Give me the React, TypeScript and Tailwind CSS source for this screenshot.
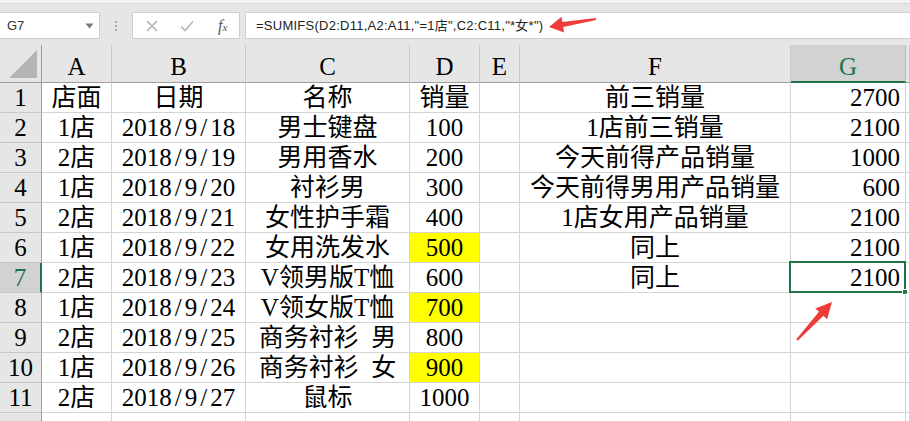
import React from "react";

type Row = { a: string; b: string; c: string; d: string; dy?: boolean; f: string; g: string };

const rows: Row[] = [
  { a: "店面", b: "日期", c: "名称", d: "销量", f: "前三销量", g: "2700" },
  { a: "1店", b: "2018/9/18", c: "男士键盘", d: "100", f: "1店前三销量", g: "2100" },
  { a: "2店", b: "2018/9/19", c: "男用香水", d: "200", f: "今天前得产品销量", g: "1000" },
  { a: "1店", b: "2018/9/20", c: "衬衫男", d: "300", f: "今天前得男用产品销量", g: "600" },
  { a: "2店", b: "2018/9/21", c: "女性护手霜", d: "400", f: "1店女用产品销量", g: "2100" },
  { a: "1店", b: "2018/9/22", c: "女用洗发水", d: "500", dy: true, f: "同上", g: "2100" },
  { a: "2店", b: "2018/9/23", c: "V领男版T恤", d: "600", f: "同上", g: "2100" },
  { a: "1店", b: "2018/9/24", c: "V领女版T恤", d: "700", dy: true, f: "", g: "" },
  { a: "2店", b: "2018/9/25", c: "商务衬衫\u00a0\u00a0男", d: "800", f: "", g: "" },
  { a: "1店", b: "2018/9/26", c: "商务衬衫\u00a0\u00a0女", d: "900", dy: true, f: "", g: "" },
  { a: "2店", b: "2018/9/27", c: "鼠标", d: "1000", f: "", g: "" },
  { a: "", b: "", c: "", d: "", f: "", g: "" },
];

function dateText(s: string) {
  const parts = s.split("/");
  return parts.map((p, i) => (
    <React.Fragment key={i}>
      {i > 0 && <span className="mx-[3px]">/</span>}
      {p}
    </React.Fragment>
  ));
}

const cell =
  "h-[30px] border-r border-b border-[#d4d4d4] leading-[29px] whitespace-nowrap overflow-visible text-black";

export default function App() {
  return (
    <div className="relative w-[910px] h-[421px] overflow-hidden bg-white font-['Liberation_Serif','Noto_Sans_CJK_SC',serif] text-[25px]">
      {/* Formula bar */}
      <div className="h-[3px] bg-[#f3f3f3]" />
      <div className="h-[42px] bg-[#e6e6e6] border-t border-[#d6d6d6] flex items-start pt-[8px]">
        <div className="w-[100px] h-[27px] bg-white border border-l-0 border-[#cfcfcf] flex items-center justify-between pl-[7px] pr-[5px] font-['Liberation_Sans','Noto_Sans_CJK_SC',sans-serif] text-[13px] text-[#333]">
          <span>G7</span>
          <svg width="9" height="6" viewBox="0 0 9 6">
            <path d="M0.5 0.5 L8.5 0.5 L4.5 5.5 Z" fill="#7a7a7a" />
          </svg>
        </div>
        <div className="w-[32px] h-[27px] flex flex-col items-center justify-center gap-[2px]">
          <div className="w-[2px] h-[2px] bg-[#a8a8a8]" />
          <div className="w-[2px] h-[2px] bg-[#a8a8a8]" />
          <div className="w-[2px] h-[2px] bg-[#a8a8a8]" />
        </div>
        <div className="w-[108px] h-[27px] bg-white border border-[#cfcfcf] flex items-center">
          <svg className="ml-[13px]" width="12" height="12" viewBox="0 0 12 12">
            <path d="M1 1 L11 11 M11 1 L1 11" stroke="#b5b5b5" strokeWidth="1.6" />
          </svg>
          <svg className="ml-[22px]" width="14" height="12" viewBox="0 0 14 12">
            <path d="M1 6.5 L5 10.5 L13 1.5" stroke="#b5b5b5" strokeWidth="1.6" fill="none" />
          </svg>
          <span className="ml-[24px] font-['Liberation_Serif',serif] italic text-[16px] text-[#555] leading-none">
            f<span className="text-[11px]">x</span>
          </span>
        </div>
        <div className="ml-[5px] flex-1 h-[27px] bg-white border border-r-0 border-[#cfcfcf] flex items-center pl-[10px] font-['Liberation_Sans','Noto_Sans_CJK_SC',sans-serif] text-[13px] tracking-[0.25px] text-[#222] whitespace-nowrap">
          =SUMIFS(D2:D11,A2:A11,"=1店",C2:C11,"*女*")
        </div>
      </div>

      {/* Grid */}
      <div className="grid grid-cols-[42px_70px_134px_164px_70px_40px_271px_115px_1fr]">
        {/* header row */}
        <div className="h-[38px] bg-[#e6e6e6] border-r border-b border-r-[#9e9e9e] border-b-[#9e9e9e] flex items-end justify-end pr-[4px] pb-[4px]">
          <svg width="28" height="28" viewBox="0 0 28 28">
            <path d="M28 0 L28 28 L0 28 Z" fill="#b4b4b4" />
          </svg>
        </div>
        {["A", "B", "C", "D", "E", "F", "G", ""].map((l) =>
          l === "G" ? (
            <div
              key={l}
              className="h-[38px] bg-[#d2d2d2] border-r border-r-[#bdbdbd] border-b-2 border-b-[#217346] flex items-center justify-center text-[#217346] leading-none pt-[6px]"
            >
              {l}
            </div>
          ) : (
            <div
              key={l || "h"}
              className="h-[38px] bg-[#e6e6e6] border-r border-r-[#c8c8c8] border-b border-b-[#9e9e9e] flex items-center justify-center leading-none pt-[6px]"
            >
              {l}
            </div>
          )
        )}
        {rows.map((r, i) => {
          const n = i + 1;
          const sel = n === 7;
          return (
            <React.Fragment key={n}>
              <div
                className={
                  sel
                    ? "h-[30px] bg-[#d2d2d2] border-r-2 border-r-[#217346] border-b border-b-[#c8c8c8] text-center leading-[29px] text-[#217346]"
                    : "h-[30px] bg-[#e6e6e6] border-r border-r-[#9e9e9e] border-b border-b-[#c8c8c8] text-center leading-[29px]"
                }
              >
                {n <= 11 ? n : ""}
              </div>
              <div className={`${cell} text-center`}>{r.a}</div>
              <div className={`${cell} text-center`}>{dateText(r.b)}</div>
              <div className={`${cell} text-center`}>{r.c}</div>
              <div className={`${cell} text-center ${r.dy ? "bg-[#ffff00]" : ""}`}>{r.d}</div>
              <div className={cell} />
              <div className={`${cell} text-center`}>{r.f}</div>
              <div className={`${cell} text-right pr-[5px] relative`}>
                {r.g}
                {sel && (
                  <>
                    <div className="absolute left-[-2px] top-[-2px] right-[-1px] bottom-[-1px] border-2 border-[#217346]" />
                    <div className="absolute right-[-3px] bottom-[-3px] w-[6px] h-[6px] bg-[#217346] border border-white" />
                  </>
                )}
              </div>
              <div className={cell} />
            </React.Fragment>
          );
        })}
      </div>

      {/* Arrows overlay */}
      <svg className="absolute left-0 top-0 pointer-events-none" width="910" height="421" viewBox="0 0 910 421">
        <polygon
          points="549,27 561.5,16.7 562.4,22.1 595.8,18 596.2,20 563.2,27.1 564.1,32.5"
          fill="#ef3b3b"
        />
        <polygon
          points="832,302 815.3,308.4 819,311.8 796.3,339.3 797.7,340.7 823.4,315.8 827.1,319.2"
          fill="#ef3b3b"
        />
      </svg>
    </div>
  );
}
